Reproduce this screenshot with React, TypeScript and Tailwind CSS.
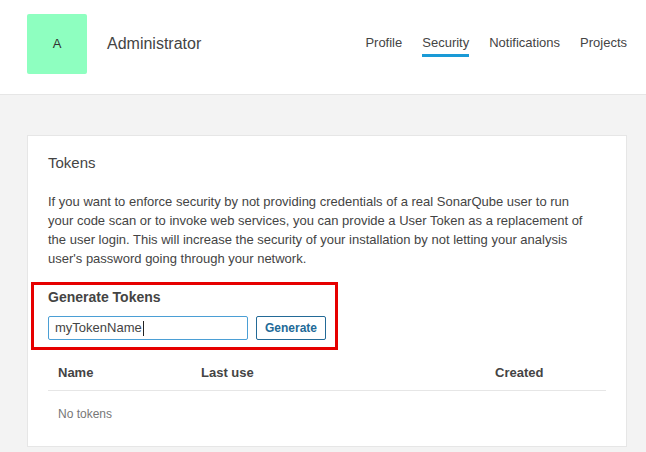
import React from "react";

export default function App() {
  const font = { fontFamily: '"Liberation Sans", Arial, sans-serif' };
  return (
    <div className="min-h-[452px] w-[646px] bg-[#f3f3f3] text-[#444]" style={font}>
      <div className="h-[95px] bg-white border-b border-[#e6e6e6] flex items-start pl-[27px] pr-[19px] pt-[14px]">
        <div className="w-[60px] h-[60px] rounded-[2px] bg-[#8effc0] flex items-center justify-center text-[13px] text-[#333]">
          A
        </div>
        <div className="h-[60px] flex items-center ml-[20px] text-[16px] text-[#444] pb-[1px]">
          Administrator
        </div>
        <nav className="ml-auto flex gap-[20px] pt-[21px] text-[13px] leading-[16px]">
          <span className="pb-[3px] border-b-[3px] border-transparent">Profile</span>
          <span className="pb-[3px] border-b-[3px] border-[#1a9ad6]">Security</span>
          <span className="pb-[3px] border-b-[3px] border-transparent">Notifications</span>
          <span className="pb-[3px] border-b-[3px] border-transparent">Projects</span>
        </nav>
      </div>

      <div className="pt-[40px] pl-[27px] pr-[19px]">
        <div className="relative w-[600px] bg-white border border-[#e6e6e6] px-[20px] pt-[18px] pb-[9px]">
          <h2 className="text-[15px] leading-[18px] font-normal">Tokens</h2>
          <p className="mt-[19.5px] text-[13px] leading-[19px] whitespace-nowrap">
            If you want to enforce security by not providing credentials of a real SonarQube user to run
            <br />
            your code scan or to invoke web services, you can provide a User Token as a replacement of
            <br />
            the user login. This will increase the security of your installation by not letting your analysis
            <br />
            user's password going through your network.
          </p>
          <h3 className="mt-[20px] text-[14px] leading-[18px] font-bold">Generate Tokens</h3>
          <div className="mt-[10.5px] flex items-center gap-[8px]">
            <div className="w-[200px] h-[24px] border border-[#4b9fd5] rounded-[2px] px-[6px] flex items-center text-[13px] text-[#444]">
              myTokenName<span className="inline-block w-px h-[15px] bg-[#222] ml-[1px]"></span>
            </div>
            <button className="h-[24px] px-[8px] border border-[#236a97] rounded-[2px] text-[12px] font-bold text-[#236a97] bg-white">
              Generate
            </button>
          </div>
          <div className="absolute left-[3px] top-[146px] w-[307px] h-[68px] border-[3px] border-[#e60000] pointer-events-none"></div>

          <div className="mt-[16px] flex h-[35px] items-center border-b border-[#e6e6e6] text-[13px] font-bold">
            <div className="w-[143px] pl-[10px]">Name</div>
            <div className="w-[294px] pl-[10px]">Last use</div>
            <div className="pl-[10px]">Created</div>
          </div>
          <div className="h-[46px] flex items-center pl-[10px] text-[12px] text-[#777]">No tokens</div>
        </div>
      </div>
    </div>
  );
}
